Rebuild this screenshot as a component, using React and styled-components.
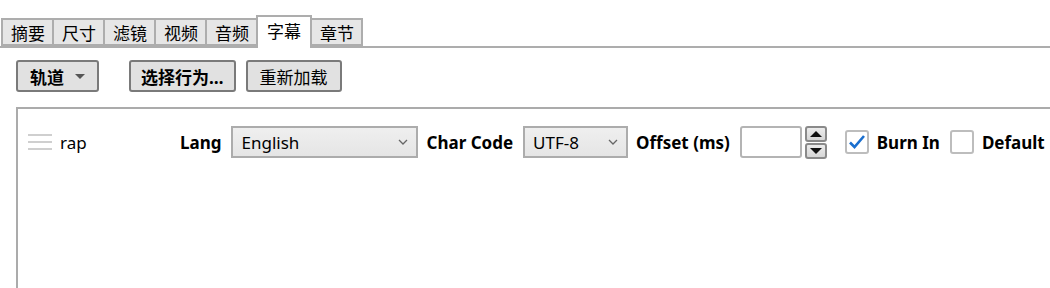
import React from 'react';
import styled, { createGlobalStyle } from 'styled-components';

const GlobalStyle = createGlobalStyle`
  html, body {
    margin: 0;
    padding: 0;
    background: #fff;
    overflow: hidden;
  }
  body {
    font-family: "Noto Sans", "Noto Sans CJK SC", sans-serif;
    color: #000;
  }
`;

const TabBar = styled.div`
  display: flex;
  align-items: flex-end;
  height: 46px;
  padding-left: 1px;
  border-bottom: 2px solid #adadad;
`;

const Tab = styled.div`
  box-sizing: border-box;
  height: ${p => (p.$active ? '33px' : '28px')};
  margin-bottom: ${p => (p.$active ? '-2px' : '0')};
  margin-right: -2px;
  padding: ${p => (p.$active ? '0 9px 4px 9px' : '0 7px 0 8px')};
  border: 2px solid #adadad;
  border-bottom: ${p => (p.$active ? 'none' : '2px solid #adadad')};
  background: ${p => (p.$active ? '#fff' : '#e6e6e6')};
  position: relative;
  z-index: ${p => (p.$active ? 1 : 0)};
  display: flex;
  align-items: center;
  font-family: "Noto Sans CJK SC", sans-serif;
  font-size: 17px;
  line-height: 1;
`;

const Toolbar = styled.div`
  display: flex;
  align-items: center;
  padding: 12px 0 0 16px;
`;

const Button = styled.button`
  box-sizing: border-box;
  height: 32px;
  margin-right: ${p => p.$gap || 10}px;
  padding: 0 ${p => p.$pad || 12}px;
  border: 2px solid #7a7a7a;
  border-radius: 3px;
  background: #e1e1e1;
  font-family: "Noto Sans", "Noto Sans CJK SC", sans-serif;
  font-size: 17px;
  font-weight: ${p => (p.$bold ? 700 : 400)};
  color: #000;
  display: flex;
  align-items: center;
  gap: 11px;
`;

const Caret = styled.span`
  width: 0;
  height: 0;
  border-left: 5px solid transparent;
  border-right: 5px solid transparent;
  border-top: 5px solid #555;
`;

const Panel = styled.div`
  box-sizing: border-box;
  margin: 15px 0 0 16px;
  height: 181px;
  border: 2px solid #ababab;
  border-right: none;
  border-bottom: none;
  padding: 17px 0 0 10px;
`;

const TrackRow = styled.div`
  display: flex;
  align-items: center;
  height: 32px;
  font-size: 17px;
  white-space: nowrap;

  & > * {
    flex: none;
  }
`;

const Handle = styled.div`
  width: 24px;
  display: flex;
  flex-direction: column;
  gap: 5px;
  margin-right: 8px;

  span {
    display: block;
    height: 2px;
    background: #cfcfcf;
  }
`;

const TrackName = styled.div`
  width: 120px;
`;

const Label = styled.label`
  font-weight: 700;
  margin-right: 10px;
`;

const Select = styled.div`
  box-sizing: border-box;
  width: ${p => p.$width}px;
  height: 32px;
  margin-right: 8px;
  border: 2px solid #acacac;
  background: linear-gradient(#efefef, #e5e5e5);
  display: flex;
  align-items: center;
  justify-content: space-between;
  padding: 0 8px 0 8px;

  svg {
    flex: none;
  }
`;

const NumberBox = styled.div`
  display: flex;
  align-items: center;
  margin-right: 18px;
`;

const NumberInput = styled.div`
  box-sizing: border-box;
  width: 62px;
  height: 32px;
  border: 2px solid #b4b4b4;
  border-radius: 3px;
  background: #fff;
  margin-right: 3px;
`;

const Spinner = styled.div`
  display: flex;
  flex-direction: column;
  gap: 1px;
`;

const SpinButton = styled.div`
  box-sizing: border-box;
  width: 22px;
  height: 16px;
  border: 2px solid #8a8a8a;
  border-radius: 3px;
  background: linear-gradient(#ececec, #d6d6d6);
  display: flex;
  align-items: center;
  justify-content: center;

  span {
    width: 0;
    height: 0;
    border-left: 6px solid transparent;
    border-right: 6px solid transparent;
    ${p => (p.$up ? 'border-bottom: 6px solid #111;' : 'border-top: 6px solid #111;')}
  }
`;

const Check = styled.div`
  box-sizing: border-box;
  width: 24px;
  height: 24px;
  border: 2px solid #bdbdbd;
  border-radius: 3px;
  background: #fff;
  margin-right: 8px;
  display: flex;
  align-items: center;
  justify-content: center;
`;

const Chevron = () => (
  <svg width="10" height="6" viewBox="0 0 10 6">
    <polyline points="1,1 5,5 9,1" fill="none" stroke="#666" strokeWidth="1.3" />
  </svg>
);

const Tick = () => (
  <svg width="18" height="16" viewBox="0 0 18 16">
    <polyline points="2,8.5 6.5,13 16,2" fill="none" stroke="#1a6fcf" strokeWidth="2.6" />
  </svg>
);

const tabs = ['摘要', '尺寸', '滤镜', '视频', '音频', '字幕', '章节'];

export default function App() {
  return (
    <>
      <GlobalStyle />
      <TabBar>
        {tabs.map(t => (
          <Tab key={t} $active={t === '字幕'}>{t}</Tab>
        ))}
      </TabBar>
      <Toolbar>
        <Button $bold $gap={30} $pad={12}>轨道 <Caret /></Button>
        <Button $bold $pad={10}>选择行为…</Button>
        <Button $pad={12}>重新加载</Button>
      </Toolbar>
      <Panel>
        <TrackRow>
          <Handle><span /><span /><span /></Handle>
          <TrackName>rap</TrackName>
          <Label>Lang</Label>
          <Select $width={187}>English <Chevron /></Select>
          <Label>Char Code</Label>
          <Select $width={105}>UTF-8 <Chevron /></Select>
          <Label>Offset (ms)</Label>
          <NumberBox>
            <NumberInput />
            <Spinner>
              <SpinButton $up><span /></SpinButton>
              <SpinButton><span /></SpinButton>
            </Spinner>
          </NumberBox>
          <Check><Tick /></Check>
          <Label>Burn In</Label>
          <Check />
          <Label>Default</Label>
        </TrackRow>
      </Panel>
    </>
  );
}
